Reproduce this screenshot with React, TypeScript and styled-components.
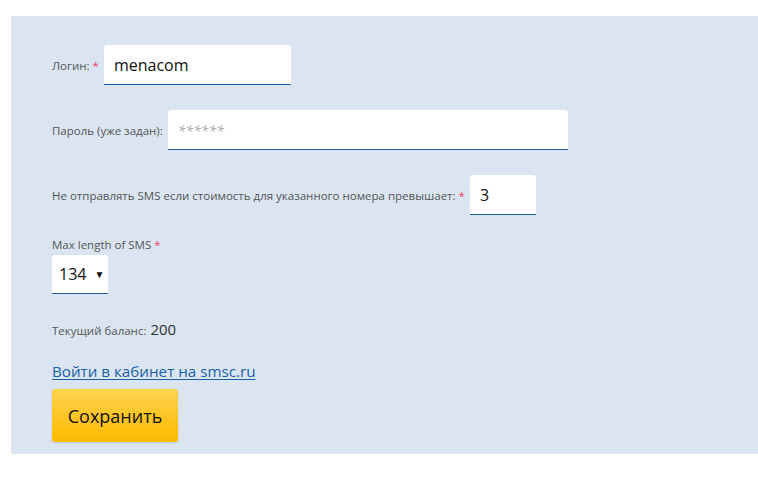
import React from 'react'
import styled, { createGlobalStyle } from 'styled-components'

const Global = createGlobalStyle`
  html, body { margin: 0; padding: 0; background: #fff; }
  body { font-family: 'Open Sans', 'Noto Sans', sans-serif; }
`

const Panel = styled.div`
  margin: 16px 0 0 11px;
  width: 747px;
  height: 438px;
  box-sizing: border-box;
  background: #dae5f1;
  padding: 29px 0 0 41px;
  display: flex;
  flex-direction: column;
  align-items: flex-start;
`

const Row = styled.div<{ $mt?: number }>`
  display: flex;
  align-items: center;
  margin-top: ${(p) => p.$mt ?? 0}px;
`

const Label = styled.label`
  font-size: 11.5px;
  color: #555;
  margin-right: 5px;
  white-space: nowrap;
`

const Req = styled.span`
  color: #e8475f;
  margin-left: 3px;
`

const Input = styled.input<{ $w: number }>`
  width: ${(p) => p.$w}px;
  height: 40px;
  box-sizing: border-box;
  border: none;
  border-bottom: 1px solid #1b5fa8;
  border-radius: 3px 3px 0 0;
  background: #fff;
  padding: 0 10px;
  font-family: inherit;
  font-size: 16px;
  color: #111;
  outline: none;
  &::placeholder {
    color: #a8a8a8;
    font-style: italic;
    font-size: 14px;
  }
`

const Block = styled.div<{ $mt?: number }>`
  display: flex;
  flex-direction: column;
  margin-top: ${(p) => p.$mt ?? 0}px;
`

const SelectBox = styled.div`
  margin-top: 3px;
  width: 56px;
  height: 39px;
  box-sizing: border-box;
  background: #fff;
  border-bottom: 1px solid #1b5fa8;
  border-radius: 3px 3px 0 0;
  display: flex;
  align-items: center;
  padding-left: 7px;
  font-size: 16px;
  color: #111;
  gap: 8px;
`

const Caret = styled.span`
  font-size: 10px;
  color: #111;
`

const Balance = styled.div`
  margin-top: 25px;
  font-size: 11.5px;
  color: #555;
  b {
    font-weight: 400;
    font-size: 15px;
    color: #333;
    margin-left: 4px;
  }
`

const Link = styled.a`
  margin-top: 22px;
  font-size: 15.2px;
  color: #1b5fa8;
  text-decoration: underline;
  text-underline-offset: 2px;
`

const Button = styled.button`
  margin-top: 8px;
  width: 126px;
  height: 53px;
  border: none;
  border-radius: 3px;
  background: linear-gradient(#ffd24f, #ffba00);
  box-shadow: 0 1px 2px rgba(0, 0, 0, 0.12);
  font-family: inherit;
  font-size: 18px;
  color: #111;
  cursor: pointer;
`

export default function App() {
  return (
    <>
      <Global />
      <Panel>
        <Row>
          <Label>
            Логин:<Req>*</Req>
          </Label>
          <Input $w={187} defaultValue="menacom" />
        </Row>
        <Row $mt={25}>
          <Label>Пароль (уже задан):</Label>
          <Input $w={400} placeholder="******" />
        </Row>
        <Row $mt={25}>
          <Label>
            Не отправлять SMS если стоимость для указанного номера превышает:<Req>*</Req>
          </Label>
          <Input $w={66} defaultValue="3" />
        </Row>
        <Block $mt={22}>
          <Label>
            Max length of SMS<Req>*</Req>
          </Label>
          <SelectBox>
            134<Caret>▼</Caret>
          </SelectBox>
        </Block>
        <Balance>
          Текущий баланс:<b>200</b>
        </Balance>
        <Link href="#">Войти в кабинет на smsc.ru</Link>
        <Button>Сохранить</Button>
      </Panel>
    </>
  )
}
